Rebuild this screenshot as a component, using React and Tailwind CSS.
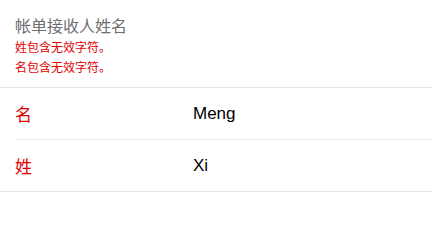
export default function App() {
  const font = { fontFamily: '"Noto Sans CJK SC", "Liberation Sans", sans-serif' };
  return (
    <div className="w-[432px] h-[220px] bg-white" style={font}>
      <div className="pl-[15px] pt-[13px] pb-[10px] bg-white">
        <div className="text-[16px] leading-[24px] text-[#6d6d72]">帐单接收人姓名</div>
        <div className="text-[12px] leading-[20px] text-[#e00000]">姓包含无效字符。</div>
        <div className="text-[12px] leading-[20px] text-[#e00000]">名包含无效字符。</div>
      </div>
      <div className="border-t border-b border-[#e5e5ea] bg-white">
        <div className="flex items-center h-[51px] pl-[15px]">
          <div className="w-[178px] text-[17px] text-[#e00000]">名</div>
          <div className="text-[17px] text-black" style={{ fontFamily: '"Liberation Sans", sans-serif' }}>Meng</div>
        </div>
        <div className="ml-[15px] h-px bg-[#ececf0]" />
        <div className="flex items-center h-[51px] pl-[15px]">
          <div className="w-[178px] text-[17px] text-[#e00000]">姓</div>
          <div className="text-[17px] text-black" style={{ fontFamily: '"Liberation Sans", sans-serif' }}>Xi</div>
        </div>
      </div>
    </div>
  );
}
